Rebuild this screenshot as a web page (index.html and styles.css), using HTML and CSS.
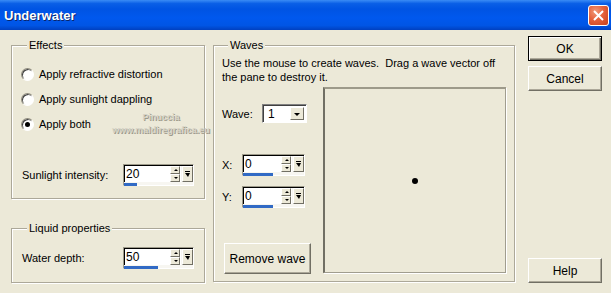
FILE: index.html
```html
<!DOCTYPE html>
<html lang="en">
<head>
    <meta charset="UTF-8">
    <title>Underwater</title>
    <link rel="stylesheet" href="styles.css">
</head>
<body>
    <div class="window">
        <div class="titlebar">
            <span class="title">Underwater</span>
            <span class="close">
                <svg width="11" height="11" viewBox="0 0 11 11"><path d="M1 1 L10 10 M10 1 L1 10" stroke="#fff" stroke-width="2"/></svg>
            </span>
        </div>

        <div class="content">
            <div class="left-col">
                <fieldset class="group effects">
                    <legend>Effects</legend>
                    <label class="radio"><span class="radio-dot"></span>Apply refractive distortion</label>
                    <label class="radio"><span class="radio-dot"></span>Apply sunlight dappling</label>
                    <label class="radio"><span class="radio-dot checked"></span>Apply both</label>

                    <div class="field-row sunlight">
                        <span class="field-label">Sunlight intensity:</span>
                        <div class="spin">
                            <div class="spin-field">
                                <span class="spin-value">20</span>
                                <span class="spin-arrows"><span class="arrow-btn up"></span><span class="arrow-btn down"></span></span>
                                <span class="spin-pop"></span>
                            </div>
                            <div class="spin-track"><div class="spin-bar" style="width:13px"></div></div>
                        </div>
                    </div>
                </fieldset>

                <fieldset class="group liquid">
                    <legend>Liquid properties</legend>
                    <div class="field-row">
                        <span class="field-label">Water depth:</span>
                        <div class="spin">
                            <div class="spin-field">
                                <span class="spin-value">50</span>
                                <span class="spin-arrows"><span class="arrow-btn up"></span><span class="arrow-btn down"></span></span>
                                <span class="spin-pop"></span>
                            </div>
                            <div class="spin-track"><div class="spin-bar" style="width:34px"></div></div>
                        </div>
                    </div>
                </fieldset>
            </div>

            <fieldset class="group waves">
                <legend>Waves</legend>
                <p class="hint">Use the mouse to create waves.&nbsp; Drag a wave vector off the pane to destroy it.</p>
                <div class="waves-body">
                    <div class="wave-controls">
                        <div class="ctrl-row wave-row">
                            <span class="ctrl-label">Wave:</span>
                            <div class="combo">
                                <span class="combo-value">1</span>
                                <span class="combo-btn"></span>
                            </div>
                        </div>
                        <div class="ctrl-row x-row">
                            <span class="ctrl-label short">X:</span>
                            <div class="spin small">
                                <div class="spin-field">
                                    <span class="spin-value">0</span>
                                    <span class="spin-arrows"><span class="arrow-btn up"></span><span class="arrow-btn down"></span></span>
                                    <span class="spin-pop"></span>
                                </div>
                                <div class="spin-track"><div class="spin-bar" style="width:30px"></div></div>
                            </div>
                        </div>
                        <div class="ctrl-row y-row">
                            <span class="ctrl-label short">Y:</span>
                            <div class="spin small">
                                <div class="spin-field">
                                    <span class="spin-value">0</span>
                                    <span class="spin-arrows"><span class="arrow-btn up"></span><span class="arrow-btn down"></span></span>
                                    <span class="spin-pop"></span>
                                </div>
                                <div class="spin-track"><div class="spin-bar" style="width:30px"></div></div>
                            </div>
                        </div>
                        <button class="btn remove">Remove wave</button>
                    </div>
                    <div class="pane"><span class="wave-dot"></span></div>
                </div>
            </fieldset>

            <div class="buttons">
                <button class="btn default">OK</button>
                <button class="btn">Cancel</button>
                <button class="btn help">Help</button>
            </div>
        </div>

        <div class="watermark">
            <span>Pinuccia</span>
            <span>www.maldiregrafica.eu</span>
        </div>
    </div>
</body>
</html>
```

FILE: styles.css
```css
body {
    margin: 0;
    padding: 0;
    font-family: "Liberation Sans", Arial, sans-serif;
    font-size: 11px;
    color: #000;
    background-color: #ece9d8;
}

.window {
    position: relative;
    width: 611px;
    height: 293px;
    overflow: hidden;
    background-color: #ece9d8;
}

/* title bar */
.titlebar {
    height: 30px;
    display: flex;
    align-items: center;
    justify-content: space-between;
    padding: 0 2px 0 4px;
    box-sizing: border-box;
    background: linear-gradient(to bottom, #3a8cf5 0%, #0a5fe6 12%, #0054e3 30%, #0058ee 60%, #0055e5 85%, #0040c0 100%);
}

.title {
    color: #fff;
    font-weight: bold;
    font-size: 13px;
    text-shadow: 1px 1px 0 #0a246a;
}

.close {
    width: 21px;
    height: 21px;
    box-sizing: border-box;
    border: 1px solid #fff;
    border-radius: 3px;
    background: radial-gradient(circle at 35% 30%, #f09a7a 0%, #e5623c 45%, #c7401c 100%);
    display: flex;
    align-items: center;
    justify-content: center;
}

/* main area */
.content {
    display: flex;
    padding: 6px 0 0 11px;
}

.left-col {
    display: flex;
    flex-direction: column;
    gap: 23px;
    width: 194px;
    margin-top: 3px;
}

.group {
    margin: 0;
    border: 1px solid #aca899;
    box-shadow: inset 1px 1px 0 #fff, 1px 1px 0 #fff;
    box-sizing: border-box;
}

.group legend {
    padding: 0 2px;
    margin-left: 6px;
    line-height: 12px;
    background-color: #ece9d8;
}

.effects {
    padding: 16px 8px 12px 9px;
}

.radio {
    display: flex;
    align-items: center;
    height: 14px;
    margin-bottom: 11px;
}

.radio-dot {
    width: 13px;
    height: 13px;
    box-sizing: border-box;
    border-radius: 50%;
    border: 1px solid;
    border-color: #8f8c7e #fff #fff #8f8c7e;
    background: #fff;
    box-shadow: inset 1px 1px 0 #404040;
    margin-right: 5px;
    position: relative;
}

.radio-dot.checked::after {
    content: "";
    position: absolute;
    left: 3px;
    top: 3px;
    width: 5px;
    height: 5px;
    border-radius: 50%;
    background: #000;
}

.field-row {
    display: flex;
    align-items: center;
}

.sunlight {
    margin-top: 33px;
}

.field-label {
    width: 101px;
    padding-left: 1px;
}

.liquid {
    padding: 13px 8px 13px 9px;
}

/* spin box with slider bar */
.spin {
    width: 71px;
    height: 22px;
    box-sizing: border-box;
    border: 1px solid;
    border-color: #9d9a8a #fff #fff #9d9a8a;
    background: #f7f6f1;
}

.spin.small {
    width: 63px;
}

.spin-field {
    display: flex;
    height: 16px;
    border-top: 1px solid #000;
    border-left: 1px solid #000;
}

.spin-value {
    flex: 1;
    background: #fff;
    line-height: 16px;
    font-size: 12px;
    padding-left: 1px;
}

.spin-arrows {
    display: flex;
    flex-direction: column;
    width: 12px;
    background: #fff;
}

.arrow-btn {
    flex: 1;
    margin: 0 1px;
    box-sizing: border-box;
    border: 1px solid;
    border-color: #fff #716f64 #716f64 #fff;
    background: #ece9d8;
    position: relative;
}

.arrow-btn::after {
    content: "";
    position: absolute;
    left: 3px;
    top: 2px;
    border-left: 2px solid transparent;
    border-right: 2px solid transparent;
}

.arrow-btn.up::after {
    border-bottom: 2px solid #000;
}

.arrow-btn.down::after {
    border-top: 2px solid #000;
}

.spin-pop {
    width: 11px;
    margin-left: 1px;
    box-sizing: border-box;
    border: 1px solid;
    border-color: #fff #716f64 #716f64 #fff;
    background: #ece9d8;
    position: relative;
}

.spin-pop::before {
    content: "";
    position: absolute;
    left: 2px;
    top: 4px;
    width: 5px;
    height: 1px;
    background: #000;
}

.spin-pop::after {
    content: "";
    position: absolute;
    left: 2px;
    top: 6px;
    border-left: 3px solid transparent;
    border-right: 2px solid transparent;
    border-top: 4px solid #000;
}

.spin-track {
    height: 4px;
    padding-top: 1px;
    box-sizing: border-box;
}

.spin-bar {
    height: 3px;
    background: #316ac5;
}

/* waves */
.waves {
    width: 301px;
    height: 243px;
    margin-left: 8px;
    margin-top: 3px;
    padding: 5px 8px 0 8px;
}

.hint {
    margin: 0;
    line-height: 14px;
    width: 284px;
}

.waves-body {
    display: flex;
    margin-top: 3px;
}

.wave-controls {
    flex: 1;
    display: flex;
    flex-direction: column;
}

.ctrl-row {
    display: flex;
    align-items: center;
}

.ctrl-label {
    width: 40px;
}

.ctrl-label.short {
    width: 20px;
}

.wave-row {
    margin-top: 17px;
}

.x-row {
    margin-top: 31px;
}

.y-row {
    margin-top: 10px;
}

.combo {
    display: flex;
    width: 45px;
    height: 19px;
    box-sizing: border-box;
    border: 1px solid;
    border-color: #808080 #fff #fff #808080;
    box-shadow: inset 1px 1px 0 #404040;
    background: #fff;
    padding: 2px 2px 2px 3px;
}

.combo-value {
    flex: 1;
    font-size: 12px;
    line-height: 14px;
    padding-left: 2px;
}

.combo-btn {
    width: 14px;
    box-sizing: border-box;
    border: 1px solid;
    border-color: #fff #716f64 #716f64 #fff;
    background: #ece9d8;
    position: relative;
}

.combo-btn::after {
    content: "";
    position: absolute;
    left: 3px;
    top: 5px;
    border-left: 3px solid transparent;
    border-right: 3px solid transparent;
    border-top: 3px solid #000;
}

.pane {
    width: 183px;
    height: 186px;
    box-sizing: border-box;
    border: 1px solid #a09d8e;
    border-left: 2px solid #716f64;
    border-top: 2px solid #9d9a8a;
    box-shadow: 1px 1px 0 #fff;
    display: flex;
    align-items: center;
    justify-content: center;
}

.wave-dot {
    width: 6px;
    height: 6px;
    border-radius: 50%;
    background: #000;
}

/* push buttons */
.btn {
    font-family: "Liberation Sans", Arial, sans-serif;
    font-size: 12px;
    color: #000;
    background: #ece9d8;
    border: 1px solid;
    border-color: #fff #716f64 #716f64 #fff;
    box-shadow: inset -1px -1px 0 #aca899;
    padding: 0;
    box-sizing: border-box;
}

.remove {
    width: 87px;
    height: 31px;
    margin-top: 35px;
    margin-left: 2px;
}

.buttons {
    display: flex;
    flex-direction: column;
    width: 74px;
    margin-left: 13px;
}

.buttons .btn {
    height: 25px;
    margin-bottom: 5px;
}

.btn.default {
    border: 1px solid #000;
    box-shadow: inset 1px 1px 0 #fff, inset -1px -1px 0 #716f64, inset -2px -2px 0 #aca899;
}

.btn.help {
    margin-top: 162px;
}

/* image watermark */
.watermark {
    position: absolute;
    left: 112px;
    top: 111px;
    width: 98px;
    display: flex;
    flex-direction: column;
    align-items: center;
    font-family: "Liberation Sans", sans-serif;
    font-size: 9px;
    font-weight: bold;
    line-height: 13px;
    color: #d6d3c6;
    text-shadow: 1px 1px 0 #9c988a;
}
```
